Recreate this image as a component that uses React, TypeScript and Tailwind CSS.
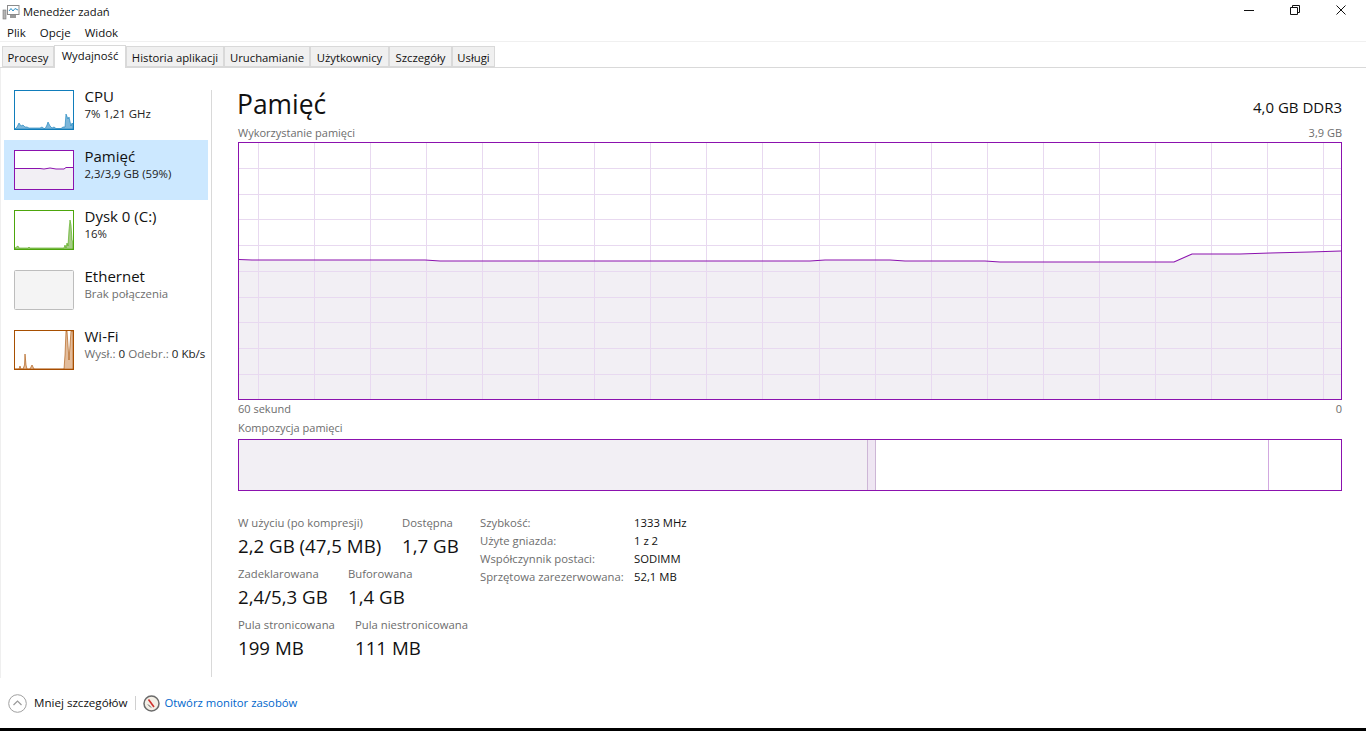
const font = "font-['Open_Sans','Noto_Sans',sans-serif]";

const tabs = ["Procesy", "Wydajność", "Historia aplikacji", "Uruchamianie", "Użytkownicy", "Szczegóły", "Usługi"];
const tabWidths = ["w-[52px]", "w-[72px]", "w-[98px]", "w-[86px]", "w-[79px]", "w-[63px]", "w-[43px]"];

function Spark({ color, fill, area }: { color: string; fill: string; area: string }) {
  return (
    <svg width="60" height="40" viewBox="0 0 60 40" className="block shrink-0">
      <rect x="0.5" y="0.5" width="59" height="39" fill="#fff" stroke={color} />
      <path d={area} fill={fill} stroke={color} strokeWidth="0.6" />
    </svg>
  );
}

function MemSpark() {
  return (
    <svg width="60" height="40" viewBox="0 0 60 40" className="block shrink-0">
      <rect x="0.5" y="0.5" width="59" height="39" fill="#fff" stroke="#8b12ae" />
      <path d="M1 18.5H26L30 19L36 18L42 19H50L52 17.5H59V39H1Z" fill="#f2eff4" stroke="none" />
      <path d="M1 18.5H26L30 19L36 18L42 19H50L52 17.5H59" fill="none" stroke="#8b12ae" />
    </svg>
  );
}

function SideItem({ title, sub, thumb, active }: { title: string; sub: React.ReactNode; thumb: React.ReactNode; active?: boolean }) {
  return (
    <div className={`h-[60px] w-[204px] ml-1 pl-[10px] pt-[10px] flex gap-[10.5px] ${active ? "bg-[#cce8ff]" : ""}`}>
      {thumb}
      <div className="min-w-0">
        <div className="text-[15px] leading-[15px] mt-[-1px] text-[#111] whitespace-nowrap">{title}</div>
        <div className="text-[11.4px] leading-[14px] mt-[3px] text-[#222] whitespace-nowrap">{sub}</div>
      </div>
    </div>
  );
}

function Stat({ label, value, gap }: { label: string; value: string; gap: string }) {
  return (
    <div className={gap}>
      <div className="text-[11.3px] leading-[14px] text-[#6d6d6d] whitespace-nowrap">{label}</div>
      <div className="text-[18.7px] leading-[24px] mt-[4px] text-[#111] whitespace-nowrap">{value}</div>
    </div>
  );
}

function UsageChart() {
  const vs = Array.from({ length: 20 }, (_, i) => 257.5 - 238 + i * 56.1);
  const hs = Array.from({ length: 9 }, (_, i) => 26 + i * 25.7);
  const line = "1,117.5 14,118 187,118 202,119 572,119 587,118 652,118 667,119 747,119 762,120 936,120 954,112 1002,112 1032,111 1072,110 1103,109";
  return (
    <svg width="1104" height="258" viewBox="0 0 1104 258" className="block">
      <rect width="1104" height="258" fill="#fff" />
      <polygon points={`${line} 1103,257 1,257`} fill="#f2eff4" />
      {vs.map((x) => (
        <line key={x} x1={Math.round(x) + 0.5} x2={Math.round(x) + 0.5} y1="1" y2="257" stroke="#e8d9f0" />
      ))}
      {hs.map((y) => (
        <line key={y} x1="1" x2="1103" y1={Math.round(y) + 0.5} y2={Math.round(y) + 0.5} stroke="#e8d9f0" />
      ))}
      <polyline points={line} fill="none" stroke="#8b12ae" strokeWidth="1.1" />
      <rect x="0.5" y="0.5" width="1103" height="257" fill="none" stroke="#8b12ae" />
    </svg>
  );
}

export default function App() {
  return (
    <div className={`${font} relative w-[1366px] h-[731px] overflow-hidden bg-white flex flex-col text-[#111]`}>
      {/* title bar */}
      <div className="h-[22px] flex items-center shrink-0">
        <svg width="18" height="16" viewBox="0 0 18 16" className="ml-[2px] mt-[1px]">
          <rect x="1" y="6" width="3" height="9" fill="#b5b5b5" stroke="#777" strokeWidth="0.6" />
          <rect x="5.5" y="1.5" width="11.5" height="9" fill="#fff" stroke="#8b8b8b" />
          <path d="M7 7L9 4.5L11 7L13 4.5L16 6" fill="none" stroke="#2f8fc4" />
          <rect x="8" y="11" width="6" height="3" fill="#9a9a9a" />
        </svg>
        <span className="text-[11.2px] ml-[3px] mt-[2px]">Menedżer zadań</span>
        <div className="ml-auto flex items-center">
          <svg width="12" height="12" viewBox="0 0 12 12" className="mr-[34px] mt-[-2px]"><path d="M1 6.5H11" stroke="#111" /></svg>
          <svg width="12" height="12" viewBox="0 0 12 12" className="mr-[34px] mt-[-2px]">
            <path d="M1.5 3.5H8.5V10.5H1.5Z M3.5 3.5V1.5H10.5V8.5H8.5" fill="none" stroke="#111" />
          </svg>
          <svg width="12" height="12" viewBox="0 0 12 12" className="mr-[19px] mt-[-2px]"><path d="M1.5 1.5L10.5 10.5M10.5 1.5L1.5 10.5" stroke="#111" /></svg>
        </div>
      </div>
      {/* menu */}
      <div className="h-[19px] flex items-center gap-[14px] pl-[7px] text-[11.5px] shrink-0 pt-[2px]">
        <span>Plik</span>
        <span>Opcje</span>
        <span>Widok</span>
      </div>
      <div className="h-[1px] bg-[#f0f0f0] shrink-0" />
      {/* tabs */}
      <div className="h-[26px] pt-[4px] pl-[2px] flex border-b border-[#d9d9d9] shrink-0">
        {tabs.map((t, i) => (
          <div
            key={t}
            className={
              i === 1
                ? `${tabWidths[i]} h-[23px] mt-[-1px] bg-white border border-b-0 border-[#d9d9d9] text-center text-[11.3px] leading-[20px] z-10`
                : `${tabWidths[i]} h-[21px] bg-[#f0f0f0] border border-[#d9d9d9] text-center text-[11.3px] leading-[22px] whitespace-nowrap`
            }
          >
            {t}
          </div>
        ))}
      </div>
      {/* body */}
      <div className="flex h-[610px] shrink-0 border-l border-[#efefef]">
        <div className="w-[210px] pt-[12px] shrink-0">
          <div className="ml-[-1px]">
            <SideItem
              title="CPU"
              sub={"7%\u00a01,21 GHz"}
              thumb={<Spark color="#117dbb" fill="#7db7da" area="M1 39L3 37L5 33L7 36L9 35L11 37L13 37L15 38H26L28 37L30 38.5H31L32 37L33 35L34 32L36 36L38 38L40 37L42 38.5H47L49 37L51 37L52 24L54 29L55 27L57 36L58 33L59 34V39Z" />}
            />
            <SideItem title="Pamięć" sub="2,3/3,9 GB (59%)" thumb={<MemSpark />} active />
            <SideItem
              title="Dysk 0 (C:)"
              sub="16%"
              thumb={<Spark color="#4da60c" fill="#a5cc86" area="M1 39V38L4 36L5 38H14L15 37L16 38H50L51 35L52 38L53 33L54 36L55 20L56 10L57 15L58 30L59 32V39Z" />}
            />
            <SideItem
              title="Ethernet"
              sub={<span className="text-[#6d6d6d]">Brak połączenia</span>}
              thumb={
                <svg width="60" height="40" viewBox="0 0 60 40" className="block shrink-0">
                  <rect x="0.5" y="0.5" width="59" height="39" rx="1" fill="#f4f4f4" stroke="#bdbdbd" />
                </svg>
              }
            />
            <SideItem
              title="Wi-Fi"
              sub={
                <span className="text-[11.6px]">
                  <span className="text-[#6d6d6d]">Wysł.:</span> 0 <span className="text-[#6d6d6d]">Odebr.:</span> 0 Kb/s
                </span>
              }
              thumb={<Spark color="#a74f01" fill="#e3bd9c" area="M1 39H5L6 36L7 39H9L10.5 35L11 24L12 35L13 39H16L18 35L20 39H50L51 25L52 1L53 1L55 30L57 1L58 1L59 1V39Z" />}
            />
          </div>
        </div>
        {/* divider */}
        <div className="w-[1px] h-[587px] mt-[22px] bg-[#d9d9d9] shrink-0" />
        {/* main */}
        <div className="ml-[26px] w-[1104px] shrink-0">
          <div className="flex justify-between h-[46px] items-start">
            <span className="text-[26.4px] leading-[36px] mt-[18px] ml-[-1px]">Pamięć</span>
            <span className="text-[15px] leading-[20px] mt-[29px]">4,0 GB DDR3</span>
          </div>
          <div className="flex justify-between text-[11px] leading-[14px] text-[#6d6d6d] mt-[12px]">
            <span>Wykorzystanie pamięci</span>
            <span>3,9 GB</span>
          </div>
          <div className="mt-[2px]">
            <UsageChart />
          </div>
          <div className="flex justify-between text-[11px] leading-[14px] text-[#6d6d6d] mt-[2px]">
            <span>60 sekund</span>
            <span>0</span>
          </div>
          <div className="text-[11px] leading-[14px] text-[#6d6d6d] mt-[5px]">Kompozycja pamięci</div>
          <div className="h-[52px] mt-[4px] border border-[#8b12ae] flex">
            <div className="w-[629px] bg-[#f2eff4] border-r border-[#cdb6d6]" />
            <div className="w-[8px] bg-[#efe6f3] border-r border-[#cdb6d6]" />
            <div className="w-[393px] border-r border-[#d2a8e0]" />
          </div>
          {/* stats */}
          <div className="flex mt-[25px]">
            <div className="w-[242px]">
              <div className="flex h-[51px]">
                <Stat label="W użyciu (po kompresji)" value="2,2 GB (47,5 MB)" gap="w-[164px]" />
                <Stat label="Dostępna" value="1,7 GB" gap="" />
              </div>
              <div className="flex h-[51px]">
                <Stat label="Zadeklarowana" value="2,4/5,3 GB" gap="w-[110px]" />
                <Stat label="Buforowana" value="1,4 GB" gap="" />
              </div>
              <div className="flex">
                <Stat label="Pula stronicowana" value="199 MB" gap="w-[117px]" />
                <Stat label="Pula niestronicowana" value="111 MB" gap="" />
              </div>
            </div>
            <div className="grid grid-cols-[154px_auto] auto-rows-[18px] text-[11.3px] leading-[18px] h-fit mt-[-2px]">
              <span className="text-[#6d6d6d]">Szybkość:</span>
              <span>1333 MHz</span>
              <span className="text-[#6d6d6d]">Użyte gniazda:</span>
              <span>1 z 2</span>
              <span className="text-[#6d6d6d]">Współczynnik postaci:</span>
              <span>SODIMM</span>
              <span className="text-[#6d6d6d] whitespace-nowrap">Sprzętowa zarezerwowana:</span>
              <span>52,1 MB</span>
            </div>
          </div>
        </div>
      </div>
      {/* footer */}
      <div className="h-[50px] flex items-center shrink-0 pl-[8px]">
        <svg width="19" height="19" viewBox="0 0 19 19">
          <circle cx="9.5" cy="9.5" r="8.8" fill="#fff" stroke="#a0a0a0" />
          <path d="M5.5 11L9.5 7L13.5 11" fill="none" stroke="#9a9a9a" strokeWidth="1.2" />
        </svg>
        <span className="text-[11.6px] ml-[7px]">Mniej szczegółów</span>
        <div className="w-[1px] h-[14px] bg-[#d0d0d0] ml-[7px]" />
        <svg width="17" height="17" viewBox="0 0 17 17" className="ml-[7px]">
          <circle cx="8.5" cy="8.5" r="7.5" fill="#f3efe6" stroke="#6b6b6b" strokeWidth="1.5" />
          <path d="M5.5 4.5L11 12" stroke="#d0312d" strokeWidth="1.6" />
          <path d="M5 9.5L8 12.5" stroke="#555" />
        </svg>
        <span className="text-[11.3px] ml-[5px] text-[#0066cc]">Otwórz monitor zasobów</span>
      </div>
      <div className="h-[3px] bg-black shrink-0" />
    </div>
  );
}
